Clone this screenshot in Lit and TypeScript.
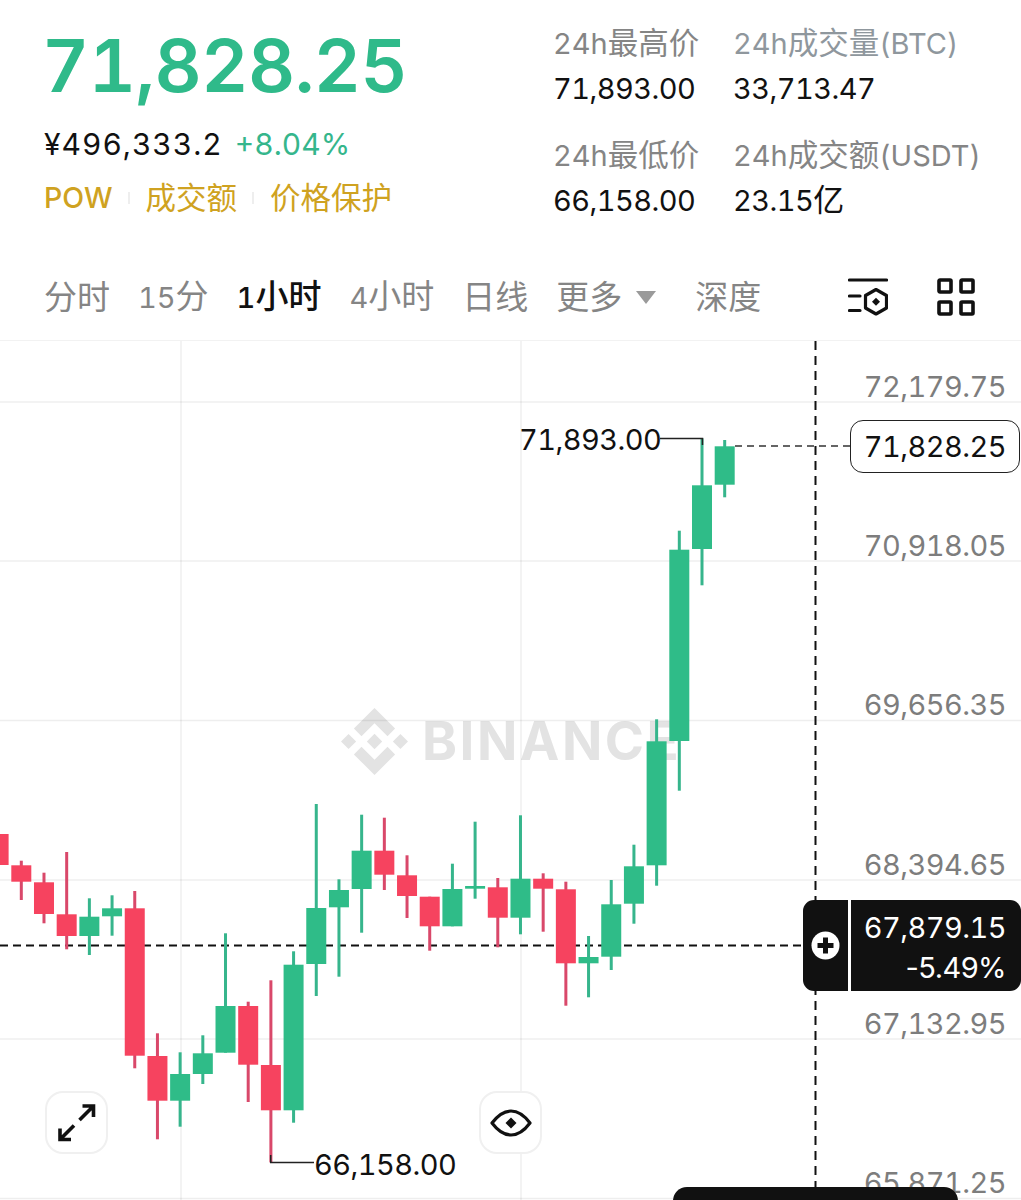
import { LitElement, css, html, svg } from 'lit'
import { customElement } from 'lit/decorators.js'

// bodyTop, bodyBottom, wickTop, wickBottom, up
type Candle = [number, number, number, number, boolean]

const CANDLES: Candle[] = [
  [834, 865, 834, 865, false],
  [865.3, 881.7, 860.7, 900, false],
  [882.3, 914, 872.7, 923.3, false],
  [914.3, 936, 852, 949.3, false],
  [916.7, 936, 898.3, 955, true],
  [908.3, 916.3, 895.3, 935.7, true],
  [908.3, 1055.7, 891, 1068.3, false],
  [1056, 1100.7, 1033.3, 1139.3, false],
  [1074, 1100.7, 1052.3, 1126.7, true],
  [1053.3, 1074, 1035.3, 1084, true],
  [1006, 1052.7, 933.3, 1052.7, true],
  [1006, 1064.7, 1001.7, 1102, false],
  [1065, 1110.3, 980.3, 1162.3, false],
  [964.7, 1110.3, 951.3, 1122.7, true],
  [908, 964, 804, 996, true],
  [890, 907.3, 879.3, 976.7, true],
  [850.7, 889, 814.7, 932.7, true],
  [850.7, 874.7, 817.7, 890, false],
  [875.3, 896, 855.3, 918, false],
  [896.7, 926.3, 896.7, 950.7, false],
  [889, 926.3, 863.7, 926.3, true],
  [886, 888.7, 821.7, 898.7, true],
  [887.3, 917.7, 878, 947.3, false],
  [878.7, 917.7, 815.3, 934.3, true],
  [878.7, 888.7, 873.3, 931.7, false],
  [889.3, 963.3, 881.7, 1005.7, false],
  [957, 963.3, 936, 997.3, true],
  [904.3, 956.7, 880, 970, true],
  [866.3, 903.7, 844.7, 923.7, true],
  [741.3, 865.3, 719.3, 885.7, true],
  [549.7, 741, 530.7, 790.7, true],
  [485.3, 549, 438.3, 585.3, true],
  [446.3, 484.7, 440, 497.3, true],
]

const CHART_TOP = 341
const GRID_Y = [402, 561, 720.5, 880, 1039, 1198.5]
const GRID_X = [181, 521]
const AXIS = [
  ['72,179.75', 387],
  ['70,918.05', 546],
  ['69,656.35', 705],
  ['68,394.65', 865],
  ['67,132.95', 1024],
  ['65,871.25', 1183],
] as const

const STATS = [
  ['24h最高价', '71,893.00', ''],
  ['24h成交量(BTC)', '33,713.47', 'cool'],
  ['24h最低价', '66,158.00', ''],
  ['24h成交额(USDT)', '23.15亿', ''],
]

// latin runs are set a bit smaller than the CJK next to them
const mixed = (text: string) =>
  text.split(/([\x00-\x7f]+)/).filter(Boolean).map(part =>
    /^[\x00-\x7f]/.test(part) ? html`<span class="latin">${part}</span>` : part,
  )

@customElement('app-root')
export class AppRoot extends LitElement {
  static styles = css`
    :host {
      display: block;
      width: 1021px;
      height: 1200px;
      overflow: hidden;
      background: #fff;
      font-family: Inter, 'Noto Sans CJK SC', sans-serif;
      font-variant-numeric: tabular-nums;
      color: #111;
    }
    .latin {
      font-size: 29px;
    }
    .header {
      display: flex;
      height: 218px;
      padding-left: 44px;
    }
    .summary {
      width: 509px;
      padding-top: 26px;
    }
    .price {
      margin-left: -2px;
      font-size: 73px;
      line-height: 80px;
      font-weight: 600;
      letter-spacing: -0.5px;
      color: #2fba8a;
    }
    .sub {
      display: flex;
      gap: 12px;
      margin-top: 18px;
      font-size: 30px;
      line-height: 40px;
    }
    .sub .cny {
      letter-spacing: 1px;
    }
    .sub .change {
      color: #35b68c;
    }
    .tags {
      display: flex;
      align-items: center;
      margin-top: 14px;
      font-size: 30.5px;
      line-height: 40px;
      color: #cfa221;
    }
    .tags .latin {
      font-size: 28.5px;
      font-weight: 500;
    }
    .tag-sep {
      width: 2px;
      height: 12px;
      margin: 0 15.5px;
      background: #eee;
    }
    .stats {
      display: grid;
      grid-template-columns: 180px auto;
      grid-auto-rows: 90px;
      row-gap: 22px;
      padding-top: 20px;
      align-content: start;
    }
    .stat-label {
      font-size: 30.5px;
      line-height: 45px;
      color: #858585;
      white-space: nowrap;
    }
    .stat-label.cool {
      color: #8f979d;
    }
    .stat-value {
      margin-top: -1px;
      font-size: 31px;
      line-height: 45px;
      letter-spacing: -0.55px;
      white-space: nowrap;
    }
    .tabs {
      display: flex;
      align-items: center;
      height: 60px;
      margin-top: 49px;
      padding: 0 46px 13px 44px;
      gap: 28px;
      font-size: 33px;
      line-height: 60px;
      color: #858585;
      border-bottom: 1px solid #f2f2f2;
    }
    .tab.active {
      color: #111;
      font-weight: 500;
    }
    .more {
      display: flex;
      align-items: center;
      gap: 14px;
      margin-right: 11px;
    }
    .caret {
      width: 20px;
      height: 13px;
    }
    .tab-icons {
      display: flex;
      align-items: center;
      gap: 49px;
      margin-left: auto;
    }
    .tab-icons svg {
      display: block;
    }
    .chart {
      position: relative;
      height: 859px;
      overflow: hidden;
    }
    .plot {
      position: absolute;
      inset: 0;
      display: block;
    }
    .watermark {
      position: absolute;
      left: 341px;
      top: 367px;
      display: flex;
      align-items: center;
      gap: 14px;
      color: #e3e3e3;
      font-size: 53px;
      line-height: 67px;
      font-weight: 700;
      letter-spacing: 2.5px;
    }
    .axis {
      position: absolute;
      right: 15px;
      font-size: 29px;
      line-height: 36px;
      letter-spacing: -0.55px;
      color: #7d7d7d;
      transform: translateY(-50%);
    }
    .extreme {
      position: absolute;
      font-size: 29px;
      line-height: 36px;
      letter-spacing: -0.55px;
      color: #111;
      transform: translateY(-50%);
    }
    .last-price {
      position: absolute;
      left: 850px;
      top: 79px;
      box-sizing: border-box;
      width: 170px;
      height: 53px;
      padding-right: 13px;
      border: 1.5px solid #222;
      border-radius: 13px;
      background: #fff;
      font-size: 29px;
      line-height: 52px;
      letter-spacing: -0.55px;
      text-align: right;
    }
    .cross {
      position: absolute;
      left: 803px;
      top: 559px;
      display: flex;
      width: 218px;
      height: 91px;
      border-radius: 11px;
      overflow: hidden;
      background: #111;
      color: #fff;
    }
    .cross-add {
      display: flex;
      align-items: center;
      justify-content: center;
      width: 45px;
      border-right: 3px solid #fff;
    }
    .cross-text {
      flex: 1;
      padding: 8px 15px 0 0;
      font-size: 29px;
      line-height: 40px;
      letter-spacing: -0.55px;
      text-align: right;
    }
    .cross-text .pct {
      font-variant-numeric: normal;
    }
    .float-btn {
      position: absolute;
      top: 750px;
      box-sizing: border-box;
      display: flex;
      align-items: center;
      justify-content: center;
      width: 63px;
      height: 63px;
      border: 2px solid #f0f0f0;
      border-radius: 18px;
      background: #fff;
    }
    .expand {
      left: 45px;
    }
    .eye {
      left: 479px;
    }
    .pill {
      position: absolute;
      left: 673px;
      top: 846px;
      width: 285px;
      height: 30px;
      border-radius: 14px 14px 0 0;
      background: #111;
    }
  `

  private renderCandle(c: Candle, i: number) {
    const [top, bottom, wickTop, wickBottom, up] = c
    const x = 21.3 + 22.69 * (i - 1)
    return svg`
      <rect x=${x - 1.5} y=${wickTop} width="3" height=${wickBottom - wickTop} fill=${up ? '#36b58c' : '#d9486a'}></rect>
      <rect x=${x - 10} y=${top} width="20" height=${bottom - top} fill=${up ? '#2fbc88' : '#f6435f'}></rect>
    `
  }

  private renderPlot() {
    return html`
      <svg class="plot" width="1021" height="859" viewBox="0 341 1021 859">
        ${GRID_Y.map(y => svg`<line x1="0" x2="1021" y1=${y} y2=${y} stroke="#000" stroke-opacity=".065" stroke-width="1.5"></line>`)}
        ${GRID_X.map(x => svg`<line x1=${x} x2=${x} y1="341" y2="1200" stroke="#000" stroke-opacity=".065" stroke-width="1.5"></line>`)}
        <line x1="0" x2="803" y1="945.5" y2="945.5" stroke="#111" stroke-width="2" stroke-dasharray="8 5"></line>
        <line x1="815.5" x2="815.5" y1="341" y2="1190" stroke="#111" stroke-width="2" stroke-dasharray="9 6"></line>
        ${CANDLES.map((c, i) => this.renderCandle(c, i))}
        <line x1="735" x2="850" y1="446" y2="446" stroke="#333" stroke-width="1.5" stroke-dasharray="7 5"></line>
        <path d="M660 438.5H702.5V445" fill="none" stroke="#222" stroke-width="1.5"></path>
        <path d="M270.7 1155V1162.5H314" fill="none" stroke="#222" stroke-width="1.5"></path>
      </svg>
    `
  }

  render() {
    return html`
      <div class="header">
        <div class="summary">
          <div class="price">71,828.25</div>
          <div class="sub">
            <span class="cny">¥496,333.2</span>
            <span class="change">+8.04%</span>
          </div>
          <div class="tags">
            ${mixed('POW')}<i class="tag-sep"></i><span>成交额</span><i class="tag-sep"></i><span>价格保护</span>
          </div>
        </div>
        <div class="stats">
          ${STATS.map(
            ([label, value, tone]) => html`
              <div>
                <div class="stat-label ${tone}">${mixed(label)}</div>
                <div class="stat-value">${mixed(value)}</div>
              </div>
            `,
          )}
        </div>
      </div>

      <div class="tabs">
        <span class="tab">分时</span>
        <span class="tab">${mixed('15')}分</span>
        <span class="tab active">${mixed('1')}小时</span>
        <span class="tab">${mixed('4')}小时</span>
        <span class="tab">日线</span>
        <span class="tab more">更多
          <svg class="caret" viewBox="0 0 20 13"><path d="M0 0H20L10 13Z" fill="#9a9a9a"></path></svg>
        </span>
        <span class="tab">深度</span>
        <div class="tab-icons">
          <svg width="40" height="38" viewBox="0 0 40 38" fill="none" stroke="#111" stroke-width="3.2" stroke-linecap="round" stroke-linejoin="round">
            <path d="M1.5 2H38.5M1.5 18H12M1.5 32.5H12"></path>
            <path d="M28 11.5 38.5 17.5V30L28 36 17.5 30V17.5Z"></path>
            <path d="M28 19.8 32 23.8 28 27.8 24 23.8Z" fill="#111" stroke="none"></path>
          </svg>
          <svg width="38" height="38" viewBox="0 0 38 38" fill="none" stroke="#111" stroke-width="3.6">
            <rect x="2" y="2" width="12" height="12" rx="1"></rect>
            <rect x="24" y="2" width="12" height="12" rx="1"></rect>
            <rect x="2" y="24" width="12" height="12" rx="1"></rect>
            <rect x="24" y="24" width="12" height="12" rx="1"></rect>
          </svg>
        </div>
      </div>

      <div class="chart">
        <div class="watermark">
          <svg width="67" height="67" viewBox="0 0 126.61 126.61" fill="#e3e3e3">
            <path d="m38.73 53.2 24.59-24.58 24.6 24.6 14.3-14.31L63.32 0 24.43 38.89zM0 63.31l14.3-14.31 14.31 14.31-14.31 14.3zM38.73 73.41l24.59 24.59 24.6-24.6 14.31 14.29-38.9 38.91-38.91-38.88-.02-.02zM98 63.31l14.3-14.31 14.31 14.3-14.31 14.32zM77.83 63.3 63.32 48.78 52.59 59.51l-1.24 1.23-2.54 2.54 14.51 14.5 14.51-14.47z"></path>
          </svg>
          <span>BINANCE</span>
        </div>
        ${this.renderPlot()}
        ${AXIS.map(([label, y]) => html`<div class="axis" style="top:${y - CHART_TOP}px">${label}</div>`)}
        <div class="extreme" style="left:519px;top:${440 - CHART_TOP}px">71,893.00</div>
        <div class="extreme" style="left:314px;top:${1165 - CHART_TOP}px">66,158.00</div>
        <div class="last-price">71,828.25</div>
        <div class="cross">
          <div class="cross-add">
            <svg width="29" height="29" viewBox="0 0 29 29">
              <circle cx="14.5" cy="14.5" r="14" fill="#fff"></circle>
              <path d="M12 6.5H17V12H22.5V17H17V22.5H12V17H6.5V12H12Z" fill="#111"></path>
            </svg>
          </div>
          <div class="cross-text">
            <div>67,879.15</div>
            <div class="pct">-5.49%</div>
          </div>
        </div>
        <div class="float-btn expand">
          <svg width="42" height="42" viewBox="0 0 42 42" fill="none" stroke="#111" stroke-width="3.6">
            <path d="M23.5 18 37 4.5M26.5 4H37.5V15"></path>
            <path d="M18 23.5 4.5 37M4 26.5V37.5H15"></path>
          </svg>
        </div>
        <div class="float-btn eye">
          <svg width="42" height="28" viewBox="0 0 42 28">
            <path d="M2 14C8 6 14 2 21 2S34 6 40 14C34 22 28 26 21 26S8 22 2 14Z" fill="none" stroke="#111" stroke-width="3.2" stroke-linejoin="round"></path>
            <path d="M21 8.5 26.5 14 21 19.5 15.5 14Z" fill="#111"></path>
          </svg>
        </div>
        <div class="pill"></div>
      </div>
    `
  }
}
